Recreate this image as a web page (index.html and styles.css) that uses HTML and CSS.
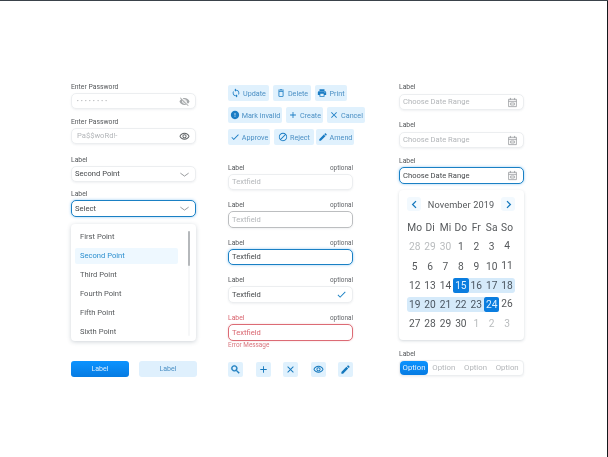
FILE: index.html
```html
<!DOCTYPE html>
<html lang="en">
<head>
<meta charset="utf-8">
<title>UI Kit</title>
<link rel="stylesheet" href="styles.css">
</head>
<body>
<svg class="sprite" aria-hidden="true">
  <symbol id="i-sync" viewBox="0 0 24 24"><path d="M12 4V1L8 5l4 4V6c3.31 0 6 2.69 6 6 0 1.01-.25 1.97-.7 2.8l1.46 1.46C19.54 15.03 20 13.57 20 12c0-4.42-3.58-8-8-8zm0 14c-3.31 0-6-2.69-6-6 0-1.01.25-1.97.7-2.8L5.24 7.74C4.46 8.97 4 10.43 4 12c0 4.42 3.58 8 8 8v3l4-4-4-4v3z"/></symbol>
  <symbol id="i-delete" viewBox="0 0 24 24"><path d="M6 19c0 1.1.9 2 2 2h8c1.1 0 2-.9 2-2V7H6v12zM8 9h8v10H8V9zm7.5-5l-1-1h-5l-1 1H5v2h14V4z"/></symbol>
  <symbol id="i-print" viewBox="0 0 24 24"><path d="M19 8H5c-1.66 0-3 1.34-3 3v6h4v4h12v-4h4v-6c0-1.66-1.34-3-3-3zm-3 11H8v-5h8v5zm3-7c-.55 0-1-.45-1-1s.45-1 1-1 1 .45 1 1-.45 1-1 1zm-1-9H6v4h12V3z"/></symbol>
  <symbol id="i-error" viewBox="0 0 24 24"><path d="M12 2C6.48 2 2 6.48 2 12s4.48 10 10 10 10-4.48 10-10S17.52 2 12 2zm1 15h-2v-2h2v2zm0-4h-2V7h2v6z"/></symbol>
  <symbol id="i-add" viewBox="0 0 24 24"><path d="M19 13h-6v6h-2v-6H5v-2h6V5h2v6h6v2z"/></symbol>
  <symbol id="i-close" viewBox="0 0 24 24"><path d="M19 6.41L17.59 5 12 10.59 6.41 5 5 6.41 10.59 12 5 17.59 6.41 19 12 13.41 17.59 19 19 17.59 13.41 12z"/></symbol>
  <symbol id="i-check" viewBox="0 0 24 24"><path d="M9 16.17L4.83 12l-1.42 1.41L9 19 21 7l-1.41-1.41z"/></symbol>
  <symbol id="i-block" viewBox="0 0 24 24"><path d="M12 2C6.48 2 2 6.48 2 12s4.48 10 10 10 10-4.48 10-10S17.52 2 12 2zM4 12c0-4.42 3.58-8 8-8 1.85 0 3.55.63 4.9 1.69L5.69 16.9C4.63 15.55 4 13.85 4 12zm8 8c-1.85 0-3.55-.63-4.9-1.69L18.31 7.1C19.37 8.45 20 10.15 20 12c0 4.42-3.58 8-8 8z"/></symbol>
  <symbol id="i-edit" viewBox="0 0 24 24"><path d="M3 17.25V21h3.75L17.81 9.94l-3.75-3.75L3 17.25zM20.71 7.04c.39-.39.39-1.02 0-1.41l-2.34-2.34c-.39-.39-1.02-.39-1.41 0l-1.83 1.83 3.75 3.75 1.83-1.83z"/></symbol>
  <symbol id="i-search" viewBox="0 0 24 24"><path d="M15.5 14h-.79l-.28-.27C15.41 12.59 16 11.11 16 9.5 16 5.91 13.09 3 9.5 3S3 5.91 3 9.5 5.91 16 9.5 16c1.61 0 3.09-.59 4.23-1.57l.27.28v.79l5 4.99L20.49 19l-4.99-5zm-6 0C7.01 14 5 11.99 5 9.5S7.01 5 9.5 5 14 7.01 14 9.5 11.99 14 9.5 14z" stroke="currentColor" stroke-width="1"/></symbol>
  <symbol id="i-eye" viewBox="0 0 24 24"><path d="M12 6c3.79 0 7.17 2.13 8.82 5.5C19.17 14.87 15.79 17 12 17s-7.17-2.13-8.82-5.5C4.83 8.13 8.21 6 12 6m0-2C7 4 2.73 7.11 1 11.5 2.73 15.89 7 19 12 19s9.27-3.11 11-7.5C21.27 7.11 17 4 12 4zm0 5c1.38 0 2.5 1.12 2.5 2.5S13.38 14 12 14s-2.5-1.12-2.5-2.5S10.62 9 12 9m0-2c-2.48 0-4.5 2.02-4.5 4.5S9.52 16 12 16s4.5-2.02 4.5-4.5S14.48 7 12 7z"/></symbol>
  <symbol id="i-eye-off" viewBox="0 0 24 24"><path d="M12 7c2.76 0 5 2.24 5 5 0 .65-.13 1.26-.36 1.83l2.92 2.92c1.51-1.26 2.7-2.89 3.43-4.75-1.73-4.39-6-7.5-11-7.5-1.4 0-2.74.25-3.98.7l2.16 2.16C10.74 7.13 11.35 7 12 7zM2 4.27l2.28 2.28.46.46C3.08 8.3 1.78 10.02 1 12c1.73 4.39 6 7.5 11 7.5 1.55 0 3.03-.3 4.38-.84l.42.42L19.73 22 21 20.73 3.27 3 2 4.27zM7.53 9.8l1.55 1.55c-.05.21-.08.43-.08.65 0 1.66 1.34 3 3 3 .22 0 .44-.03.65-.08l1.55 1.55c-.67.33-1.41.53-2.2.53-2.76 0-5-2.24-5-5 0-.79.2-1.53.53-2.2zm4.31-.78l3.15 3.15.02-.16c0-1.66-1.34-3-3-3l-.17.01z"/></symbol>
  <symbol id="i-down" viewBox="0 0 24 24"><path d="M3 9l9 6.500 9-6.500" fill="none" stroke="currentColor" stroke-width="2"/></symbol>
  <symbol id="i-left" viewBox="0 0 24 24"><path d="M16 3l-9 9 9 9" fill="none" stroke="currentColor" stroke-width="3.4"/></symbol>
  <symbol id="i-right" viewBox="0 0 24 24"><path d="M8 3l9 9-9 9" fill="none" stroke="currentColor" stroke-width="3.4"/></symbol>
  <symbol id="i-cal" viewBox="0 0 24 24"><path d="M3.500 5h17v16h-17zM3.500 9.500h17M7.500 2v4M16.500 2v4M8 13h8v4.500H8z" fill="none" stroke="currentColor" stroke-width="1.6"/></symbol>
</svg>

<main class="page">
  <section class="col">
    <div class="field">
      <div class="label">Enter Password</div>
      <div class="control"><span class="value dots">• • • • • • • •</span><svg class="icon end faint"><use href="#i-eye-off"/></svg></div>
    </div>
    <div class="field gap-8">
      <div class="label">Enter Password</div>
      <div class="control"><span class="value hint inset">Pa$$woRd!-</span><svg class="icon end dark"><use href="#i-eye"/></svg></div>
    </div>
    <div class="field gap-11">
      <div class="label">Label</div>
      <div class="control"><span class="value">Second Point</span><svg class="icon end muted"><use href="#i-down"/></svg></div>
    </div>
    <div class="field gap-7">
      <div class="label">Label</div>
      <div class="control focus tall"><span class="value">Select</span><svg class="icon end muted"><use href="#i-down"/></svg></div>
    </div>
    <div class="menu">
      <ul class="menu-list">
        <li>First Point</li>
        <li class="selected">Second Point</li>
        <li>Third Point</li>
        <li>Fourth Point</li>
        <li>Fifth Point</li>
        <li>Sixth Point</li>
      </ul>
      <span class="scroll-track"><span class="scroll-thumb"></span></span>
    </div>
    <div class="cta-row">
      <button class="cta primary">Label</button>
      <button class="cta soft">Label</button>
    </div>
  </section>

  <section class="col col-mid">
    <div class="chips">
      <button class="chip w-update"><svg class="icon"><use href="#i-sync"/></svg>Update</button>
      <button class="chip w-delete"><svg class="icon"><use href="#i-delete"/></svg>Delete</button>
      <button class="chip w-print"><svg class="icon"><use href="#i-print"/></svg>Print</button>
    </div>
    <div class="chips">
      <button class="chip w-mark"><svg class="icon"><use href="#i-error"/></svg>Mark invalid</button>
      <button class="chip w-create"><svg class="icon"><use href="#i-add"/></svg>Create</button>
      <button class="chip w-cancel"><svg class="icon"><use href="#i-close"/></svg>Cancel</button>
    </div>
    <div class="chips">
      <button class="chip w-approve"><svg class="icon"><use href="#i-check"/></svg>Approve</button>
      <button class="chip w-reject"><svg class="icon"><use href="#i-block"/></svg>Reject</button>
      <button class="chip w-amend"><svg class="icon"><use href="#i-edit"/></svg>Amend</button>
    </div>

    <div class="field gap-18">
      <div class="label split"><span>Label</span><span class="opt">optional</span></div>
      <div class="control"><span class="value hint">Textfield</span></div>
    </div>
    <div class="field gap-10">
      <div class="label split"><span>Label</span><span class="opt">optional</span></div>
      <div class="control hover tall"><span class="value hint">Textfield</span></div>
    </div>
    <div class="field gap-10">
      <div class="label split"><span>Label</span><span class="opt">optional</span></div>
      <div class="control focus"><span class="value">Textfield</span></div>
    </div>
    <div class="field gap-10">
      <div class="label split"><span>Label</span><span class="opt">optional</span></div>
      <div class="control tall"><span class="value">Textfield</span><svg class="icon end blue"><use href="#i-check"/></svg></div>
    </div>
    <div class="field gap-10 invalid">
      <div class="label split"><span>Label</span><span class="opt">optional</span></div>
      <div class="control error tall"><span class="value">Textfield</span></div>
      <div class="message">Error Message</div>
    </div>
    <div class="icon-row">
      <button class="square"><svg class="icon"><use href="#i-search"/></svg></button>
      <button class="square"><svg class="icon"><use href="#i-add"/></svg></button>
      <button class="square"><svg class="icon"><use href="#i-close"/></svg></button>
      <button class="square"><svg class="icon"><use href="#i-eye"/></svg></button>
      <button class="square"><svg class="icon"><use href="#i-edit"/></svg></button>
    </div>
  </section>

  <section class="col">
    <div class="field">
      <div class="label tight">Label</div>
      <div class="control"><span class="value hint">Choose Date Range</span><svg class="icon end muted"><use href="#i-cal"/></svg></div>
    </div>
    <div class="field gap-10">
      <div class="label tight">Label</div>
      <div class="control"><span class="value hint">Choose Date Range</span><svg class="icon end muted"><use href="#i-cal"/></svg></div>
    </div>
    <div class="field gap-8">
      <div class="label">Label</div>
      <div class="control focus tall"><span class="value">Choose Date Range</span><svg class="icon end muted"><use href="#i-cal"/></svg></div>
    </div>
    <div class="calendar">
      <div class="cal-head">
        <button class="nav"><svg class="icon"><use href="#i-left"/></svg></button>
        <span class="month">November 2019</span>
        <button class="nav"><svg class="icon"><use href="#i-right"/></svg></button>
      </div>
      <div class="cal-grid">
        <span class="dow">Mo</span><span class="dow">Di</span><span class="dow">Mi</span><span class="dow">Do</span><span class="dow">Fr</span><span class="dow">Sa</span><span class="dow">So</span>
        <span class="off">28</span><span class="off">29</span><span class="off">30</span><span>1</span><span>2</span><span>3</span><span class="lift">4</span>
        <span>5</span><span>6</span><span>7</span><span>8</span><span>9</span><span>10</span><span class="lift">11</span>
        <span>12</span><span>13</span><span>14</span><span class="pick from">15</span><span class="range">16</span><span class="range">17</span><span class="range last">18</span>
        <span class="range first">19</span><span class="range">20</span><span class="range">21</span><span class="range">22</span><span class="range">23</span><span class="pick to">24</span><span class="lift">26</span>
        <span>27</span><span>28</span><span>29</span><span>30</span><span class="off">1</span><span class="off">2</span><span class="off">3</span>
      </div>
    </div>
    <div class="field gap-9">
      <div class="label">Label</div>
      <div class="segments">
        <span class="seg active">Option</span>
        <span class="seg">Option</span>
        <span class="seg">Option</span>
        <span class="seg">Option</span>
      </div>
    </div>
  </section>
</main>
</body>
</html>
```
FILE: styles.css
```css
* { box-sizing: border-box; }
html, body { margin: 0; padding: 0; }
body {
  width: 608px;
  height: 457px;
  overflow: hidden;
  background: #fff;
  color: #45484b;
  font-family: Roboto, "Liberation Sans", sans-serif;
  font-size: 7.6px;
  box-shadow: inset 0 1px #3a424a, inset -1px 0 #15181b;
}
.sprite { width: 0; height: 0; display: block; overflow: hidden; }
button { font: inherit; border: 0; padding: 0; margin: 0; }
.page {
  display: flex;
  padding: 82px 0 0 71px;
  filter: blur(.45px);
}
.col { width: 125px; flex: none; }
.col-mid { margin: 3px 46px 0 32px; }

.label { font-size: 6.8px; line-height: 10px; height: 10px; margin-bottom: 1px; color: #55585b; }
.label.tight { margin-bottom: 2px; }
.split { display: flex; justify-content: space-between; }
.opt { font-size: 6.4px; color: #63666a; }
.gap-7 { margin-top: 7px; }
.gap-8 { margin-top: 8px; }
.gap-9 { margin-top: 9px; }
.gap-10 { margin-top: 10px; }
.gap-11 { margin-top: 11px; }
.gap-18 { margin-top: 18px; }

.control {
  display: flex;
  align-items: center;
  justify-content: space-between;
  height: 16px;
  padding: 0 5px 0 3px;
  background: #fff;
  border: 1px solid #eceef0;
  border-radius: 5px;
  box-shadow: 0 1px 2px rgba(60, 80, 100, .08);
}
.tall { height: 17px; }
.control.focus { border: 1.5px solid #1a80c4; box-shadow: 0 0 3px rgba(20, 140, 230, .45); }
.control.hover { border: 1.5px solid #bcbec0; }
.control.error { border: 1.5px solid #dc6b75; box-shadow: 0 0 2px rgba(220, 90, 100, .3); }
.value { line-height: 1; white-space: nowrap; }
.hint { color: #b3b6b9; }
.inset { margin-left: 2px; }
.dots { color: #9a9da0; font-size: 5px; letter-spacing: .55px; margin-left: 2px; }
.icon { width: 11px; height: 11px; fill: currentColor; flex: none; display: block; }
.muted { color: #8f9295; }
.faint { color: #a6a9ab; }
.dark { color: #5f6366; }
.blue { color: #1a80c4; }

.invalid .label, .invalid .opt { color: #d9656f; }
.invalid .opt { color: #63666a; }
.invalid .value { color: #d9656f; }
.message { font-size: 6.4px; line-height: 9px; color: #d9757e; }

.menu {
  position: relative;
  height: 117px;
  margin-top: 7px;
  border-radius: 4px;
  background: #fff;
  box-shadow: 0 1px 4px rgba(60, 80, 100, .25);
}
.menu-list { list-style: none; margin: 0; padding: 3px 18px 0 4px; }
.menu-list li { height: 19px; line-height: 19px; padding-left: 5px; color: #55585b; }
.menu-list .selected { height: 16px; line-height: 16px; margin: 1.500px 0; background: #eef8ff; color: #2c8fcf; border-radius: 2px; }
.scroll-track { position: absolute; top: 7px; right: 6px; bottom: 5px; width: 2px; background: #f6f7f8; border-radius: 1px; }
.scroll-thumb { display: block; height: 35px; background: #b5b8bb; border-radius: 1px; }

.cta-row { display: flex; gap: 10px; margin-top: 20px; width: 127px; }
.cta { width: 58px; height: 16px; border-radius: 3px; font-size: 7px; }
.primary { background: linear-gradient(#0c93ff, #067be2); color: #dcefff; }
.soft { background: #dff0fd; color: #4a8fc4; }

.chips { display: flex; gap: 4px; height: 16px; margin-bottom: 6px; width: 140px; }
.chips:nth-child(3) { margin-bottom: 0; }
.chip {
  display: flex;
  align-items: center;
  justify-content: center;
  gap: 2px;
  height: 16px;
  border-radius: 2px;
  background: #e0f1fd;
  color: #4a8fc4;
  font-size: 7.2px;
  white-space: nowrap;
}
.chip .icon { color: #1a7cc4; width: 10px; height: 10px; }
.w-update { width: 41px; }
.w-delete { width: 38px; }
.w-print { width: 32px; }
.w-mark { width: 54px; }
.w-create { width: 37px; }
.w-cancel { width: 38px; }
.w-approve { width: 42px; }
.w-reject { width: 40px; }
.w-amend { width: 38px; margin-left: -2px; }

.icon-row { display: flex; justify-content: space-between; margin-top: 12px; }
.square { width: 15px; height: 15px; display: flex; align-items: center; justify-content: center; background: #e0f1fd; border-radius: 2px; color: #1478bd; }

.calendar {
  height: 150px;
  margin-top: 6px;
  padding: 7px 8px 0;
  background: #fff;
  border-radius: 4px;
  box-shadow: 0 1px 3px rgba(60, 80, 100, .22);
}
.cal-head { display: flex; align-items: center; justify-content: space-between; height: 14px; padding: 0 1px 0 0; }
.month { font-size: 9.2px; color: #55585b; letter-spacing: .1px; }
.nav { width: 14px; height: 14px; display: flex; align-items: center; justify-content: center; background: #f2f9fe; border-radius: 3px; color: #1478bd; }
.nav .icon { width: 9px; height: 9px; }
.cal-grid {
  display: grid;
  grid-template-columns: repeat(7, 15.4px);
  grid-auto-rows: 15px;
  row-gap: 4.300px;
  margin-top: 9px;
  font-size: 10.2px;
  color: #55585b;
  text-align: center;
}
.cal-grid > span { line-height: 15px; }
.cal-grid .dow { margin-bottom: -1px; }
.off { color: #b9bcbe; }
.lift { position: relative; top: -1px; }
.range { background: #d5eafa; color: #4a5560; }
.first { border-radius: 3px 0 0 3px; }
.last { border-radius: 0 3px 3px 0; }
.pick { background: #0a7ddf; color: #dff0ff; border-radius: 2px; }

.segments {
  display: flex;
  justify-content: space-between;
  height: 16px;
  padding: 0;
  border: 1px solid #eceef0;
  border-radius: 4px;
  background: #fff;
  box-shadow: 0 1px 2px rgba(60, 80, 100, .08);
}
.seg { flex: 1; text-align: center; line-height: 14px; font-size: 7.8px; color: #b3b6b9; }
.seg.active { flex: none; width: 28px; background: linear-gradient(#0c93ff, #067be2); color: #e3f2ff; border-radius: 4px; }
```
